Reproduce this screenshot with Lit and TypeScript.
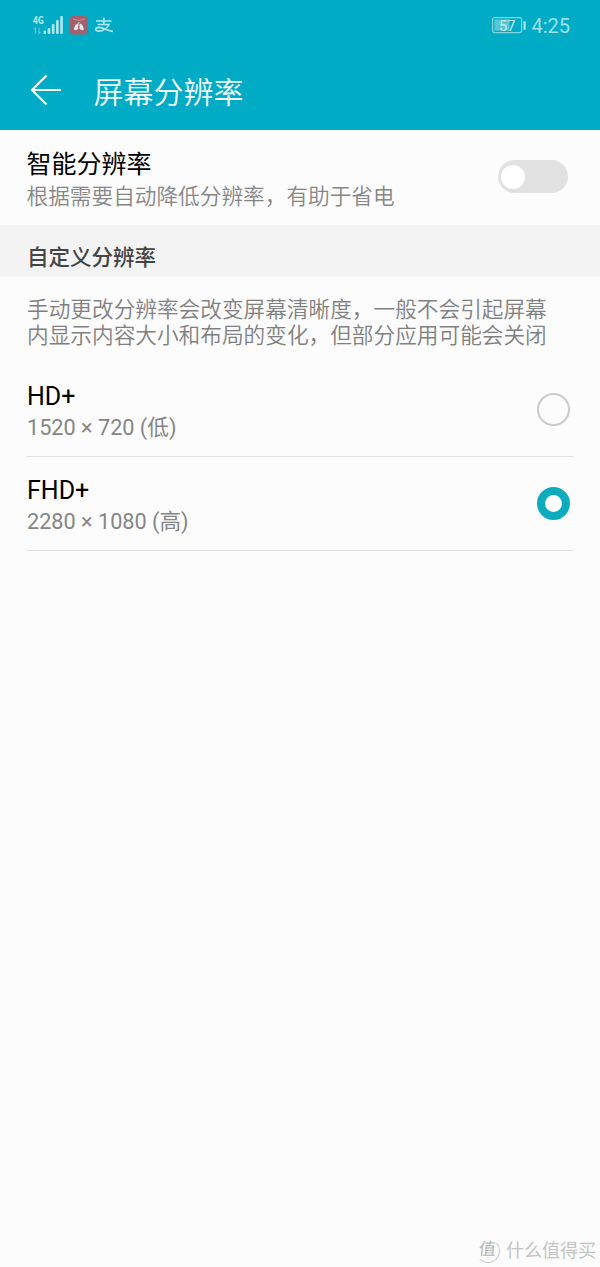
import { LitElement, html, css, svg } from "lit";
import { customElement, property, state } from "lit/decorators.js";

const SIGNAL_BARS = [3.5, 6, 10, 14, 18];

@customElement("status-bar")
class StatusBar extends LitElement {
  static styles = css`
    :host {
      display: flex;
      justify-content: space-between;
      height: 50px;
      padding: 0 30px 0 32px;
      color: #9fe0e9;
    }
    .left,
    .right {
      display: flex;
      align-items: center;
    }
    .clock {
      font-size: 20px;
      line-height: 24px;
      margin: 2px 0 0 5px;
    }
    svg {
      display: block;
    }
    .battery {
      margin-top: 2px;
    }
    .pct {
      font: 14.5px Roboto, sans-serif;
    }
    .net {
      font: bold 10.5px "Open Sans", sans-serif;
    }
  `;
  render() {
    return html`
      <div class="left">
        <svg width="84" height="30" viewBox="32 10 84 30">
          <text class="net" x="33" y="24" fill="#b5eaf0" textLength="11" lengthAdjust="spacingAndGlyphs">4G</text>
          <path d="M35.5 33.5v-5.500l-1.500 1.500M39 28v5.500l1.500-1.500" fill="none" stroke="#5cc5d4" stroke-width="1.200" />
          ${SIGNAL_BARS.map(
            (h, i) => svg`<rect x=${43.4 + i * 4.2} y=${34 - h} width="2.700" height=${h} rx="1" fill="#a9e5ec" />`
          )}
          <rect x="69.500" y="16" width="18.500" height="18.500" rx="4" fill="#a4606c" />
          <path d="M73 19q6 3 12 0" fill="none" stroke="#bf8f98" stroke-width="1" />
          <path
            d="M77.800 23.500c-1.800.2-4 3.500-3.800 6 .3 1.500 4.300.4 4.300-1.200zM79.900 23.500c1.800.2 4 3.500 3.800 6-.3 1.500-4.300.4-4.300-1.200z"
            fill="#dfe9ec"
          />
          <path d="M78.850 22v4" stroke="#dfe9ec" stroke-width=".8" />
          <path
            d="M96 21h15.500M103.800 17.500v7M97.500 24.500h11.500c-1.500 3.500-6 6.700-10 6.700-4.500 0-4.300-4 0-3.800 4.500.3 8.500 3.500 14 4"
            fill="none"
            stroke="#b2e8ef"
            stroke-width="1.700"
          />
        </svg>
      </div>
      <div class="right">
        <svg class="battery" width="35" height="20" viewBox="491 16 35 20">
          <rect x="492.600" y="17.600" width="29" height="15" rx="2" fill="none" stroke="#7fd5e0" stroke-width="1.200" />
          <rect x="494.500" y="19.500" width="15" height="11.200" fill="#5cc5d4" />
          <rect x="523.500" y="21" width="2.200" height="9" rx="1" fill="#a9e5ec" />
          <text class="pct" x="499" y="30.500" fill="#c4eef3" textLength="16.500" lengthAdjust="spacingAndGlyphs">57</text>
        </svg>
        <span class="clock">4:25</span>
      </div>
    `;
  }
}

@customElement("toggle-switch")
class ToggleSwitch extends LitElement {
  @property({ type: Boolean }) on = false;
  static styles = css`
    :host {
      display: block;
    }
    .track {
      display: flex;
      align-items: center;
      box-sizing: border-box;
      width: 70px;
      height: 33px;
      padding: 0 4px 0 3px;
      border-radius: 17px;
      background: #e1e1e1;
    }
    .track.on {
      justify-content: flex-end;
      background: #00acc5;
    }
    .thumb {
      width: 24px;
      height: 24px;
      border-radius: 50%;
      background: #fff;
    }
  `;
  render() {
    return html`<div class="track ${this.on ? "on" : ""}"><div class="thumb"></div></div>`;
  }
}

@customElement("resolution-option")
class ResolutionOption extends LitElement {
  @property() name = "";
  @property() detail = "";
  @property({ type: Boolean }) selected = false;
  static styles = css`
    :host {
      display: flex;
      justify-content: space-between;
      align-items: center;
      box-sizing: border-box;
      height: 94px;
      margin: 0 27px;
      padding-right: 3px;
      border-bottom: 1px solid #e0e0e0;
    }
    .text {
      padding-top: 4px;
    }
    .name {
      font-size: 25px;
      line-height: 32px;
      color: #000;
    }
    .detail {
      font-size: 21.670px;
      line-height: 29px;
      color: #858585;
    }
    .radio {
      box-sizing: border-box;
      width: 33px;
      height: 33px;
      border: 2px solid #cbcbcb;
      border-radius: 50%;
    }
    .radio.selected {
      border: 8px solid #0eabbf;
      background: #fff;
    }
  `;
  render() {
    return html`
      <div class="text">
        <div class="name">${this.name}</div>
        <div class="detail">${this.detail}</div>
      </div>
      <div class="radio ${this.selected ? "selected" : ""}"></div>
    `;
  }
}

@customElement("app-root")
class AppRoot extends LitElement {
  @state() private current = "FHD+";
  private options = [
    { name: "HD+", detail: "1520 × 720 (低)" },
    { name: "FHD+", detail: "2280 × 1080 (高)" },
  ];
  static styles = css`
    :host {
      display: flex;
      flex-direction: column;
      height: 1267px;
      background: #fcfcfc;
      font-family: Roboto, "Noto Sans CJK SC", sans-serif;
      overflow: hidden;
    }
    .header {
      height: 130px;
      background: #00acc5;
    }
    .bar {
      display: flex;
      align-items: center;
      height: 80px;
      padding-left: 30px;
    }
    .title {
      margin: 5px 0 0 31.500px;
      font-size: 30px;
      font-weight: 350;
      line-height: 40px;
      color: #f2fbfc;
    }
    .smart {
      display: flex;
      justify-content: space-between;
      box-sizing: border-box;
      height: 95px;
      padding: 19px 32px 0 26.500px;
    }
    .smart-title {
      font-size: 25px;
      line-height: 32px;
      color: #000;
    }
    .smart-note {
      font-size: 21.670px;
      font-weight: 350;
      line-height: 31px;
      color: #868686;
    }
    .switch {
      margin-top: 11px;
    }
    .section {
      box-sizing: border-box;
      height: 52px;
      padding: 17px 27px 0;
      background: #f3f3f3;
      font-size: 21.500px;
      font-weight: 500;
      line-height: 32px;
      color: #444;
    }
    .note {
      padding: 20px 27px 0;
      height: 66px;
      font-size: 21.670px;
      font-weight: 350;
      line-height: 25.500px;
      color: #808080;
      white-space: nowrap;
    }
    .brand {
      display: flex;
      align-items: center;
      gap: 6px;
      margin-top: auto;
      padding: 0 4px 2px 0;
      justify-content: flex-end;
      color: #c3c3c3;
      font-size: 18px;
      line-height: 28px;
    }
    .seal {
      display: flex;
      align-items: center;
      justify-content: center;
      box-sizing: border-box;
      width: 24px;
      height: 24px;
      border: 1px solid transparent;
      border-right-color: #ccc;
      border-bottom-color: #ccc;
      border-radius: 50%;
      font-size: 17px;
      line-height: 20px;
      color: #b5b5b5;
    }
    .glyph {
      transform: translate(-1px, -2px) skewX(-6deg);
    }
  `;
  render() {
    return html`
      <div class="header">
        <status-bar></status-bar>
        <div class="bar">
          <svg width="32" height="32" viewBox="0 0 32 32" fill="none" stroke="#fff" stroke-width="2.200">
            <path d="M31 16H2M16.500 1.500L2 16l14.500 14.500" />
          </svg>
          <div class="title">屏幕分辨率</div>
        </div>
      </div>
      <div class="smart">
        <div>
          <div class="smart-title">智能分辨率</div>
          <div class="smart-note">根据需要自动降低分辨率，有助于省电</div>
        </div>
        <toggle-switch class="switch"></toggle-switch>
      </div>
      <div class="section">自定义分辨率</div>
      <div class="note">手动更改分辨率会改变屏幕清晰度，一般不会引起屏幕<br />内显示内容大小和布局的变化，但部分应用可能会关闭</div>
      ${this.options.map(
        (o) => html`<resolution-option
          .name=${o.name}
          .detail=${o.detail}
          .selected=${o.name === this.current}
          @click=${() => (this.current = o.name)}
        ></resolution-option>`
      )}
      <div class="brand"><span class="seal"><span class="glyph">值</span></span><span>什么值得买</span></div>
    `;
  }
}
